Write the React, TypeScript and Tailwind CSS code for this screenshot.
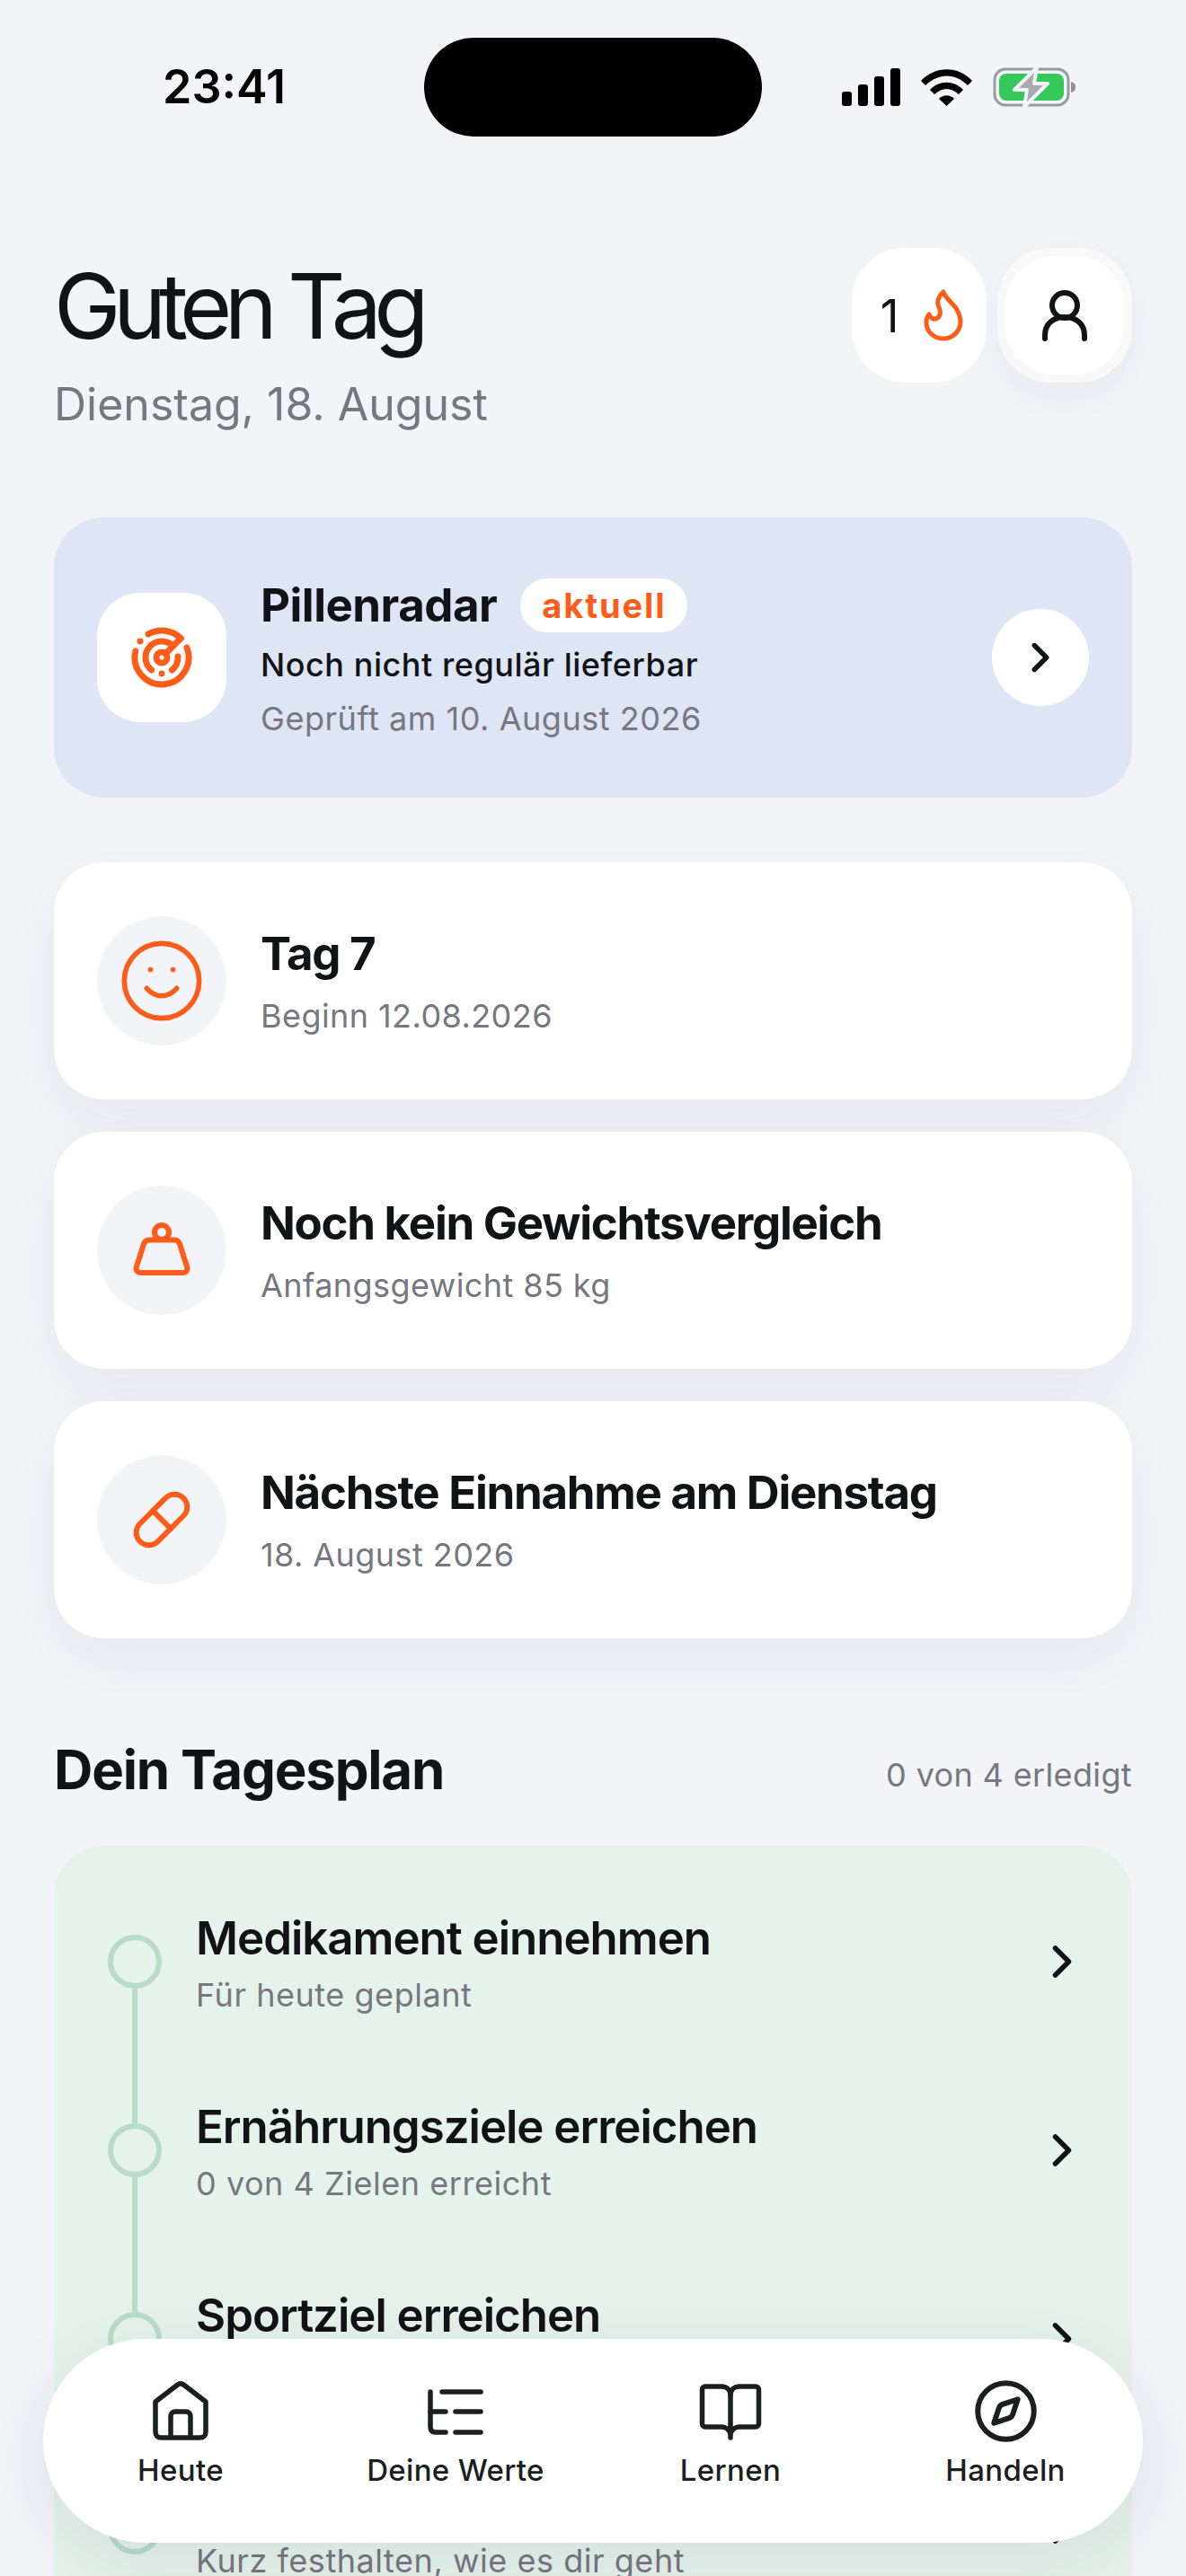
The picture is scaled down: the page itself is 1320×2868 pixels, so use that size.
import { Radar, Smile, Pill, ChevronRight, Compass } from 'lucide-react'

function StatusBar() {
  return (
    <div className="flex items-center h-[110px] mt-[42px] pl-[181px] pr-[121px]">
      <span className="w-[291px] text-[52px] font-semibold text-black leading-none">23:41</span>
      <div className="w-[376px] h-[110px] rounded-full bg-black" />
      <div className="flex items-center gap-[22px] ml-auto">
        <svg width="66" height="42" viewBox="0 0 66 42" fill="#000">
          <rect x="0" y="26" width="11" height="16" rx="3" />
          <rect x="18" y="18" width="11" height="24" rx="3" />
          <rect x="36" y="9" width="11" height="33" rx="3" />
          <rect x="54" y="0" width="11" height="42" rx="3" />
        </svg>
        <svg width="58" height="42" viewBox="0 0 58 42" fill="none">
          <path d="M0 14 C16 -3 42 -3 57 14 L52 19 C38 5 20 5 5 19 Z" fill="#000" />
          <path d="M10 24 C20 13 37 13 47 24 L42 29 C33 21 24 21 15 29 Z" fill="#000" />
          <path d="M20 34 C25 29 32 29 37 34 L28.500 42 Z" fill="#000" />
        </svg>
        <svg width="94" height="44" viewBox="0 0 94 44" fill="none">
          <rect x="2" y="2" width="82" height="40" rx="12" stroke="#9a9a9e" strokeWidth="3" />
          <rect x="7" y="7" width="72" height="30" rx="8" fill="#34c759" />
          <path d="M87 16 C91 17 92 19 92 22 C92 25 91 27 87 28 Z" fill="#8e8e93" />
          <path d="M49 0 L24 25 H38 L35 44 L61 18 H46 Z" fill="#a9aaae" stroke="#f2f4f8" strokeWidth="4" strokeLinejoin="round" />
        </svg>
      </div>
    </div>
  )
}

function Header() {
  return (
    <div className="flex items-start justify-between px-[60px] mt-[124px]">
      <div>
        <h1 className="text-[100px] leading-[112px] font-normal tracking-[-0.085em] text-[#121317] mt-[9px]">Guten Tag</h1>
        <p className="text-[50px] leading-[60px] text-[#76777f] mt-[23px]">Dienstag, 18. August</p>
      </div>
      <div className="flex gap-[12px]">
        <div className="w-[150px] h-[150px] rounded-[60px] bg-white flex items-center justify-center gap-[28px] pl-[6px]">
          <span className="text-[51px] text-[#121317] leading-none">1</span>
          <svg width="44" height="58" viewBox="0 0 44 58" fill="none" stroke="#ff5c1a" strokeWidth="5" strokeLinecap="round" strokeLinejoin="round">
            <path d="M22 3 C24 10 31 14 36 21 C39 26 41 30 41 36 C41 47 32 55 22 55 C11 55 3 47 3 37 C3 33 4 30 6 28 C8 32 11 34 13 33 C18 32 20 26 17 20 C14 14 17 7 22 3 Z" />
          </svg>
        </div>
        <div className="w-[150px] h-[150px] rounded-[60px] bg-[#f9f9fa] flex items-center justify-center shadow-[0_16px_48px_rgba(30,40,70,0.05)]">
          <div className="w-[132px] h-[132px] rounded-[56px] bg-white flex items-center justify-center">
            <svg width="50" height="57" viewBox="0 0 50 57" fill="none" stroke="#121317" strokeWidth="6" strokeLinecap="round">
              <circle cx="25" cy="17" r="14" />
              <path d="M3 54 V50 C3 38 12 30 25 30 C38 30 47 38 47 50 V54" />
            </svg>
          </div>
        </div>
      </div>
    </div>
  )
}

function WeightIcon() {
  return (
    <svg width="72" height="72" viewBox="0 0 72 72" fill="none" stroke="#ff5c1a" strokeWidth="6">
      <circle cx="36" cy="16" r="8" />
      <path d="M22 24.500 H50 C53 24.500 55 26 56 29 L64 54 C65.500 58 63 61 59 61 H13 C9 61 6.500 58 8 54 L16 29 C17 26 19 24.500 22 24.500 Z" />
    </svg>
  )
}

function StatCard({ icon, title, sub }: { icon: React.ReactNode; title: string; sub: string }) {
  return (
    <div className="h-[264px] rounded-[56px] bg-white flex items-center gap-[38px] px-[48px] shadow-[0_24px_70px_rgba(30,40,70,0.06)]">
      <div className="w-[144px] h-[144px] rounded-full bg-[#f2f4f8] flex items-center justify-center shrink-0">{icon}</div>
      <div>
        <div className="text-[51px] leading-[62px] font-bold tracking-[-0.025em] text-[#121317]">{title}</div>
        <div className="text-[36px] leading-[44px] tracking-[0.012em] text-[#76777f] mt-[16px]">{sub}</div>
      </div>
    </div>
  )
}

function PlanRow({ title, sub, last }: { title?: string; sub?: string; last?: boolean }) {
  return (
    <div className="flex items-start h-[210px]">
      <div className="w-[60px] shrink-0 flex flex-col items-center mt-[6px] h-[210px]">
        <div className="w-[60px] h-[60px] rounded-full border-[6px] border-[#b9dcc9] shrink-0" />
        {!last && <div className="w-[6px] h-[150px] bg-[#b9dcc9]" />}
      </div>
      <div className="ml-[38px] flex-1 mt-[-21px]">
        <div className="h-[62px] text-[51px] leading-[62px] font-semibold tracking-[-0.02em] text-[#121317]">{title}</div>
        <div className="h-[44px] text-[36px] leading-[44px] tracking-[0.015em] text-[#76777f] mt-[10px]">{sub}</div>
      </div>
      <ChevronRight className="mt-[6px] mr-[48px] text-[#121317]" size={60} strokeWidth={2.200} />
    </div>
  )
}

function BottomNav() {
  const itemCls = 'flex flex-col items-center'
  const iconCls = 'h-[68px] flex items-center justify-center'
  const labelCls = 'text-[33px] leading-[40px] font-medium tracking-[0.01em] text-[#1a2020] mt-[12px]'
  return (
    <nav className="absolute left-[48px] top-[2604px] w-[1224px] h-[227px] rounded-[114px] bg-white grid grid-cols-4 pt-[46px] shadow-[0_20px_80px_rgba(30,40,70,0.10)]">
      <div className={itemCls}>
        <div className={iconCls}>
          <svg width="62" height="66" viewBox="0 0 62 66" fill="none" stroke="#1a2020" strokeWidth="5.500" strokeLinejoin="round">
            <path d="M3 23 L27 4.500 C29.500 2.500 32.500 2.500 35 4.500 L59 23 V56 C59 61 57 63 52 63 H10 C5 63 3 61 3 56 Z" />
            <path d="M20 63 V39 C20 36 22 34 25 34 H37 C40 34 42 36 42 39 V63" />
          </svg>
        </div>
        <span className={labelCls}>Heute</span>
      </div>
      <div className={itemCls}>
        <div className={iconCls}>
          <svg width="62" height="66" viewBox="0 0 62 66" fill="none" stroke="#1a2020" strokeWidth="5.500" strokeLinecap="round">
            <path d="M3 12 V51 C3 55 5 57 9 57 H20" />
            <path d="M3 34 H20" />
            <path d="M16 12 H59" />
            <path d="M31 34 H59" />
            <path d="M31 57 H59" />
          </svg>
        </div>
        <span className={labelCls}>Deine Werte</span>
      </div>
      <div className={itemCls}>
        <div className={iconCls}>
          <svg width="70" height="66" viewBox="0 0 70 66" fill="none" stroke="#1a2020" strokeWidth="5.500" strokeLinecap="round" strokeLinejoin="round">
            <path d="M35 63 V16 C35 10 31 6 25 6 H7 C5 6 3.500 7.500 3.500 9.500 V47 C3.500 49.500 5 51 7 51 H25 C30 51 33 54 35 58" />
            <path d="M35 16 C35 10 39 6 45 6 H63 C65 6 66.500 7.500 66.500 9.500 V47 C66.500 49.500 65 51 63 51 H45 C40 51 37 54 35 58" />
          </svg>
        </div>
        <span className={labelCls}>Lernen</span>
      </div>
      <div className={itemCls}>
        <div className={iconCls}>
          <Compass size={75} strokeWidth={1.900} className="text-[#1a2020]" />
        </div>
        <span className={labelCls}>Handeln</span>
      </div>
    </nav>
  )
}

export default function App() {
  return (
    <div className="font-['Inter',sans-serif] relative w-[1320px] h-[2868px] overflow-hidden bg-[#f2f4f8]">
      <StatusBar />
      <Header />

      <div className="mx-[60px] mt-[96px] h-[312px] rounded-[56px] bg-[#dee5f5] flex items-center px-[48px]">
        <div className="w-[144px] h-[144px] rounded-[48px] bg-white flex items-center justify-center shrink-0">
          <Radar size={72} strokeWidth={2.300} className="text-[#ff5c1a]" />
        </div>
        <div className="ml-[38px] flex-1 mt-[2px]">
          <div className="flex items-center gap-[26px]">
            <span className="text-[51px] leading-[60px] font-bold tracking-[-0.01em] text-[#121317]">Pillenradar</span>
            <span className="h-[60px] px-[24px] rounded-full bg-white text-[38px] font-bold tracking-[0.05em] text-[#ff5c1a] flex items-center">aktuell</span>
          </div>
          <div className="text-[36px] leading-[44px] font-medium tracking-[0.015em] text-[#121317] mt-[14px]">Noch nicht regulär lieferbar</div>
          <div className="text-[36px] leading-[44px] tracking-[0.015em] text-[#76777f] mt-[16px]">Geprüft am 10. August 2026</div>
        </div>
        <div className="w-[108px] h-[108px] rounded-full bg-white flex items-center justify-center">
          <ChevronRight size={54} strokeWidth={2.400} className="text-[#121317]" />
        </div>
      </div>

      <div className="mx-[60px] mt-[72px] flex flex-col gap-[36px]">
        <StatCard icon={<Smile size={100} strokeWidth={1.350} className="text-[#ff5c1a]" />} title="Tag 7" sub="Beginn 12.08.2026" />
        <StatCard icon={<WeightIcon />} title="Noch kein Gewichtsvergleich" sub="Anfangsgewicht 85 kg" />
        <StatCard icon={<Pill size={68} strokeWidth={2.100} className="text-[#ff5c1a]" />} title="Nächste Einnahme am Dienstag" sub="18. August 2026" />
      </div>

      <div className="mx-[60px] mt-[116px] flex items-center justify-between h-[60px]">
        <h2 className="text-[60px] font-bold tracking-[-0.02em] text-[#121317]">Dein Tagesplan</h2>
        <span className="text-[36px] tracking-[0.01em] text-[#76777f] mt-[12px]">0 von 4 erledigt</span>
      </div>

      <div className="mx-[60px] mt-[55px] rounded-t-[56px] bg-[#e6f3ec] pt-[93px] pl-[60px] h-[900px]">
        <PlanRow title="Medikament einnehmen" sub="Für heute geplant" />
        <PlanRow title="Ernährungsziele erreichen" sub="0 von 4 Zielen erreicht" />
        <PlanRow title="Sportziel erreichen" />
        <PlanRow sub="Kurz festhalten, wie es dir geht" last />
      </div>

      <BottomNav />
    </div>
  )
}
